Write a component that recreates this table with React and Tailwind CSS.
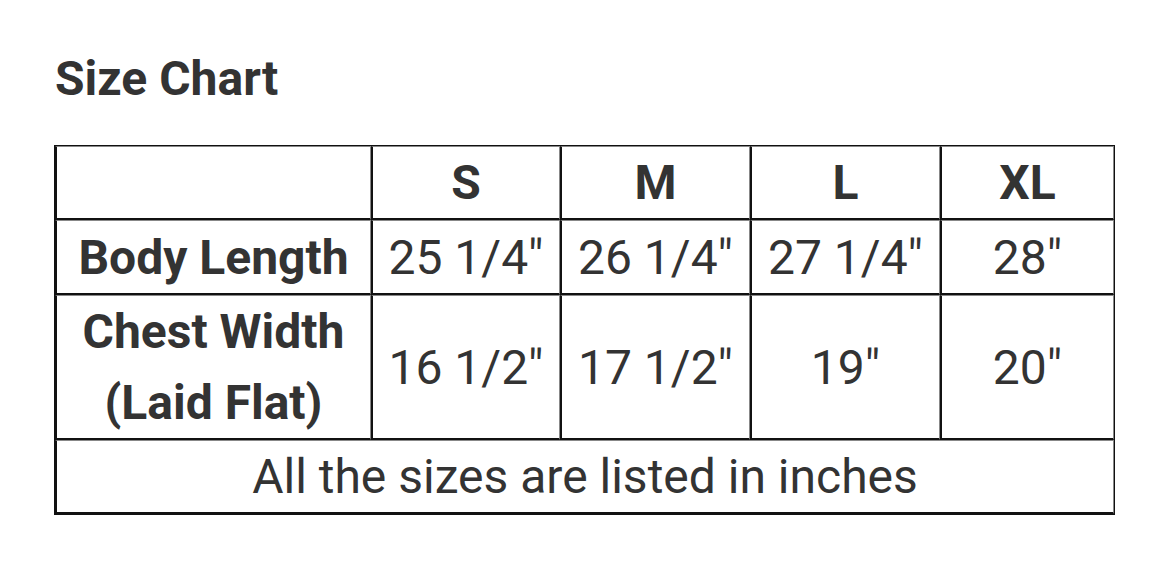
export default function App() {
  const cell =
    "border-l-2 border-l-[#111] border-t border-t-[#888] border-r border-r-[#888] border-b-2 border-b-[#111] text-center align-middle p-0";
  const sizes = ["S", "M", "L", "XL"];
  const body = ['25 1/4"', '26 1/4"', '27 1/4"', '28"'];
  const chest = ['16 1/2"', '17 1/2"', '19"', '20"'];
  return (
    <div
      className="w-[1156px] h-[580px] bg-white text-[#333] pl-[54px] pt-[50px]"
      style={{ fontFamily: "Roboto, 'Liberation Sans', sans-serif" }}
    >
      <h1 className="text-[48px] leading-[58px] font-bold pl-[1px]">Size Chart</h1>
      <table className="mt-[37px] w-[1061px] table-fixed border-separate border-spacing-0 border border-[#111] text-[48px] leading-[71px]">
        <colgroup>
          <col className="w-[316px]" />
          <col className="w-[189px]" />
          <col className="w-[190px]" />
          <col className="w-[190px]" />
          <col className="w-[174px]" />
        </colgroup>
        <tbody>
          <tr className="h-[74px]">
            <td className={cell}></td>
            {sizes.map((s) => (
              <th key={s} className={cell + " font-bold"}>
                {s}
              </th>
            ))}
          </tr>
          <tr className="h-[75px]">
            <th className={cell + " font-bold"}>Body Length</th>
            {body.map((v, i) => (
              <td key={i} className={cell}>
                {v}
              </td>
            ))}
          </tr>
          <tr className="h-[145px]">
            <th className={cell + " font-bold"}>
              Chest Width
              <br />
              (Laid Flat)
            </th>
            {chest.map((v, i) => (
              <td key={i} className={cell}>
                {v}
              </td>
            ))}
          </tr>
          <tr className="h-[73px]">
            <td colSpan={5} className={cell}>
              All the sizes are listed in inches
            </td>
          </tr>
        </tbody>
      </table>
    </div>
  );
}
